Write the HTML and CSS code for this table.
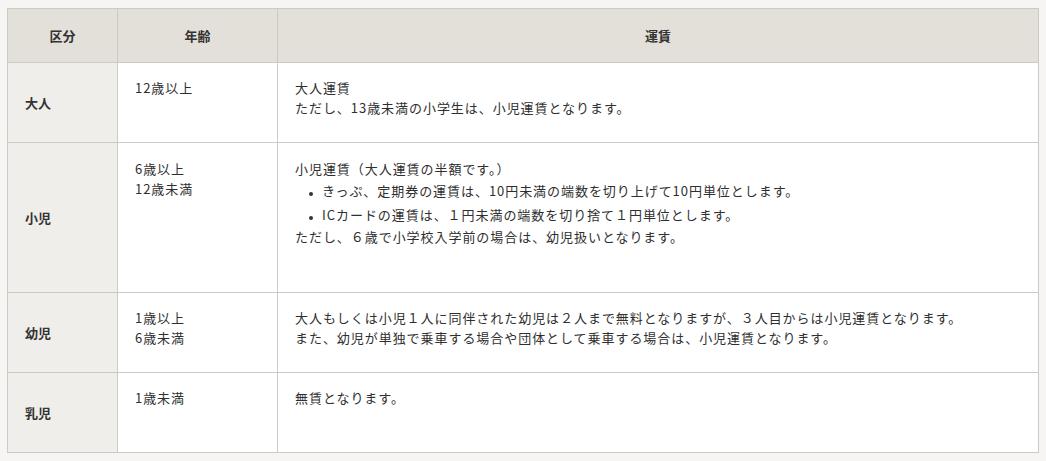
FILE: index.html
```html
<!DOCTYPE html>
<html lang="ja">
<head>
<meta charset="utf-8">
<title>運賃</title>
<link rel="stylesheet" href="styles.css">
</head>
<body>
<table class="fare-table">
  <colgroup>
    <col class="col-kind">
    <col class="col-age">
    <col class="col-fare">
  </colgroup>
  <thead>
    <tr>
      <th>区分</th>
      <th>年齢</th>
      <th>運賃</th>
    </tr>
  </thead>
  <tbody>
    <tr class="row">
      <th class="kind">大人</th>
      <td>12歳以上</td>
      <td>大人運賃<br>ただし、13歳未満の小学生は、小児運賃となります。</td>
    </tr>
    <tr class="row row-tall">
      <th class="kind">小児</th>
      <td>6歳以上<br>12歳未満</td>
      <td>小児運賃（大人運賃の半額です。）
        <ul class="notes">
          <li>きっぷ、定期券の運賃は、10円未満の端数を切り上げて10円単位とします。</li>
          <li>ICカードの運賃は、１円未満の端数を切り捨て１円単位とします。</li>
        </ul>
        ただし、６歳で小学校入学前の場合は、幼児扱いとなります。</td>
    </tr>
    <tr class="row">
      <th class="kind">幼児</th>
      <td>1歳以上<br>6歳未満</td>
      <td>大人もしくは小児１人に同伴された幼児は２人まで無料となりますが、３人目からは小児運賃となります。<br>また、幼児が単独で乗車する場合や団体として乗車する場合は、小児運賃となります。</td>
    </tr>
    <tr class="row">
      <th class="kind">乳児</th>
      <td>1歳未満</td>
      <td>無賃となります。</td>
    </tr>
  </tbody>
</table>
</body>
</html>
```

FILE: styles.css
```css
html, body {
  margin: 0;
  padding: 0;
  background: #f6f5f3;
}
body {
  padding: 8px 7px 9px 7px;
  font-family: "Noto Sans CJK JP", "Noto Sans", sans-serif;
  font-size: 13px;
  color: #333;
}
.fare-table {
  width: 100%;
  border-collapse: collapse;
  table-layout: fixed;
  background: #fff;
  border: 1px solid #cdcac3;
}
.col-kind { width: 110px; }
.col-age { width: 160px; }
.fare-table th,
.fare-table td {
  border: 1px solid #cdcac3;
  line-height: 20px;
}
.fare-table thead th {
  height: 53px;
  padding: 0;
  background: #e3e0d9;
  font-weight: bold;
  text-align: center;
  vertical-align: middle;
  color: #333;
}
.fare-table .kind {
  background: #f0eeea;
  font-weight: bold;
  text-align: left;
  vertical-align: middle;
  padding: 0 17px;
}
.fare-table td {
  vertical-align: top;
  padding: 15px 16px 0 17px;
  letter-spacing: 0.95px;
  color: #2f2f2f;
}
.row { height: 80px; }
.row-tall { height: 150px; }
.row-tall td { padding-top: 16px; }
.notes {
  list-style: none;
  margin: 0;
  padding: 0 0 0 9px;
}
.notes li {
  position: relative;
  padding: 2px 0 2px 18px;
}
.notes li::before {
  content: "";
  position: absolute;
  left: 5px;
  top: 13px;
  width: 4px;
  height: 4px;
  border-radius: 50%;
  background: #333;
}
```
